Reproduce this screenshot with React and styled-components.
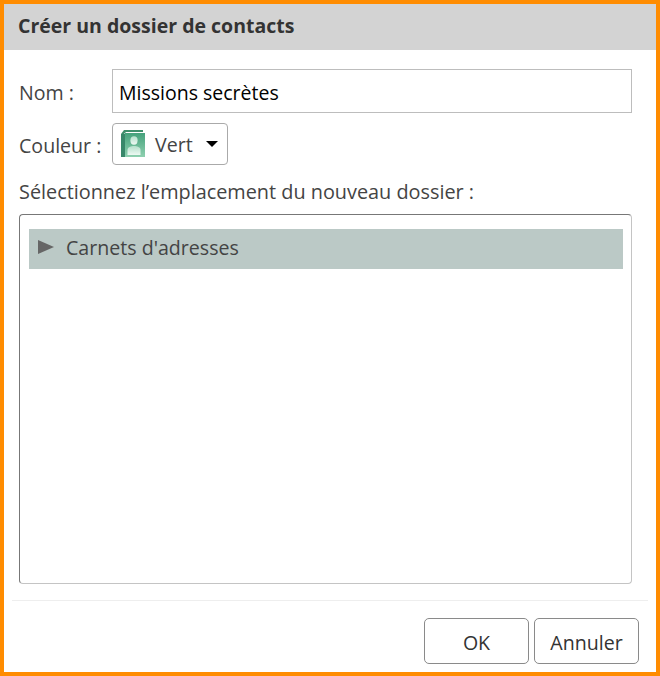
import styled, { createGlobalStyle } from "styled-components";

const Global = createGlobalStyle`
    html, body { margin: 0; padding: 0; background: #fff; }
    * { box-sizing: border-box; }
`;

const Dialog = styled.div`
    width: 660px;
    height: 676px;
    border: 4px solid #ff8c00;
    display: flex;
    flex-direction: column;
    font-family: "Open Sans", "Noto Sans", sans-serif;
    font-size: 19.6px;
    color: #444;
    background: #fff;
`;

const Header = styled.div`
    height: 46px;
    background: #d3d3d3;
    padding: 0 0 4px 14px;
    display: flex;
    align-items: center;
    font-size: 19.5px;
    font-weight: 700;
    color: #333;
`;

const Body = styled.div`
    flex: 1;
    display: flex;
    flex-direction: column;
    padding: 19px 24px 16px 15px;
`;

const Row = styled.div`
    display: flex;
    align-items: center;
    margin-bottom: ${(p) => p.$gap}px;
`;

const Label = styled.label`
    width: 93px;
    padding-top: 2px;
`;

const NameInput = styled.input`
    flex: 1;
    height: 44px;
    border: 1px solid #bdbdbd;
    padding: 2px 6px 0;
    font-family: inherit;
    font-size: 19.5px;
    color: #000;
    outline: none;
`;

const Select = styled.div`
    width: 116px;
    height: 42px;
    border: 1px solid #aaa;
    border-radius: 4px;
    display: flex;
    align-items: center;
    padding-left: 8px;
`;

const SelectText = styled.span`
    margin-left: 10px;
    flex: 1;
`;

const Caret = styled.span`
    width: 0;
    height: 0;
    margin-right: 9px;
    border-left: 6.5px solid transparent;
    border-right: 6.5px solid transparent;
    border-top: 6px solid #000;
`;

const Hint = styled.div`
    font-size: 19.85px;
    line-height: 24px;
    margin-bottom: 10px;
`;

const Tree = styled.div`
    height: 370px;
    border: 1px solid #777;
    border-bottom-color: #c4c4c4;
    border-right-color: #c4c4c4;
    border-radius: 4px;
    padding: 14px 8px 0 9px;
`;

const TreeRow = styled.div`
    height: 40px;
    background: #bbc9c6;
    display: flex;
    align-items: center;
    padding: 0 0 4px 9px;
`;

const Arrow = styled.span`
    width: 0;
    height: 0;
    margin: 0 12px 0 0;
    border-top: 7.5px solid transparent;
    border-bottom: 7.5px solid transparent;
    border-left: 16px solid #666;
`;

const Footer = styled.div`
    margin: 0 8px;
    height: 72px;
    border-top: 1px solid #eee;
    display: flex;
    justify-content: flex-end;
    align-items: flex-start;
    gap: 5px;
    padding: 17px 9px 0 0;
`;

const Button = styled.button`
    width: 105px;
    height: 46px;
    padding: 2px 0 0;
    background: #fff;
    border: 1px solid #8a8a8a;
    border-radius: 5px;
    font-family: inherit;
    font-size: 19.6px;
    color: #333;
`;

function ContactIcon() {
    return (
        <svg width="24" height="28" viewBox="0 0 24 28">
            <defs>
                <linearGradient id="page" x1="0" y1="0" x2="0" y2="1">
                    <stop offset="0" stopColor="#45a27c" />
                    <stop offset="1" stopColor="#8fd0b0" />
                </linearGradient>
                <linearGradient id="person" x1="0" y1="0" x2="0" y2="1">
                    <stop offset="0" stopColor="#b4e0cb" />
                    <stop offset="1" stopColor="#eef9f3" />
                </linearGradient>
            </defs>
            <path d="M0 4 L3 0 H22 V2 H5 L3 4 Z" fill="#3f8f6c" />
            <rect x="0" y="4" width="4" height="23" fill="#38876a" />
            <rect x="4" y="3" width="20" height="24" fill="url(#page)" />
            <ellipse cx="13" cy="10.5" rx="3.6" ry="4.2" fill="url(#person)" />
            <path d="M6.5 25 V20 C6.5 17 10 16 13 16 C16 16 19.5 17 19.5 20 V25 Z" fill="url(#person)" />
        </svg>
    );
}

export default function App() {
    return (
        <>
            <Global />
            <Dialog>
                <Header>Créer un dossier de contacts</Header>
                <Body>
                    <Row $gap={10}>
                        <Label>Nom :</Label>
                        <NameInput defaultValue="Missions secrètes" />
                    </Row>
                    <Row $gap={15}>
                        <Label>Couleur :</Label>
                        <Select>
                            <ContactIcon />
                            <SelectText>Vert</SelectText>
                            <Caret />
                        </Select>
                    </Row>
                    <Hint>Sélectionnez l’emplacement du nouveau dossier :</Hint>
                    <Tree>
                        <TreeRow>
                            <Arrow />
                            Carnets d'adresses
                        </TreeRow>
                    </Tree>
                </Body>
                <Footer>
                    <Button>OK</Button>
                    <Button>Annuler</Button>
                </Footer>
            </Dialog>
        </>
    );
}
